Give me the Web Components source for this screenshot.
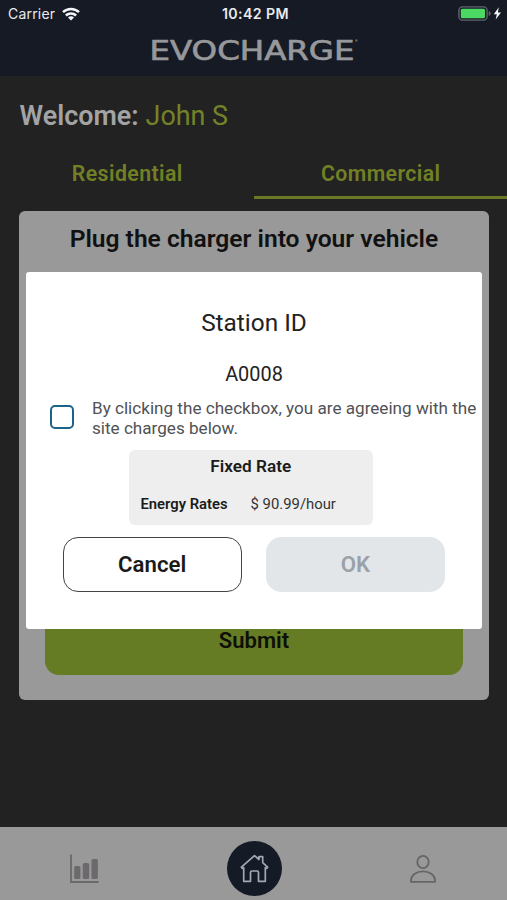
<!DOCTYPE html>
<html lang="en">
<head>
<meta charset="utf-8">
<title>EvoCharge</title>
<style>
html, body { margin: 0; height: 900px; overflow: hidden; background: #222; }
</style>
</head>
<body>
<evo-app></evo-app>
<script>
function define(name, html) {
  const tpl = document.createElement('template');
  tpl.innerHTML = html;
  customElements.define(name, class extends HTMLElement {
    constructor() {
      super();
      this.attachShadow({ mode: 'open' }).append(tpl.content.cloneNode(true));
    }
  });
}

define('status-bar', `
<style>
:host { display: grid; grid-template-columns: 1fr auto 1fr; align-items: center; height: 28px;
  padding: 0 5px 0 8px; color: #e9ebf0; font: 400 14px/28px Inter, sans-serif; }
.l { display: flex; align-items: center; gap: 7px; letter-spacing: .2px; }
.t { font-weight: 600; font-size: 14.200px; letter-spacing: .4px; margin-left: 1px; }
.r { display: flex; align-items: center; justify-content: flex-end; gap: 2px; }
svg { display: block; }
.r svg { margin-top: -2px; }
.l svg { margin-top: -1px; }
</style>
<div class="l"><span>Carrier</span>
<svg width="18" height="14" viewBox="0 0 18 14" fill="none" stroke="#f4f5f8" stroke-width="2.500">
<path d="M1 5.2C5.4 .8 12.600 .8 17 5.200"/><path d="M3.900 8.500C6.700 5.700 11.300 5.700 14.100 8.500"/>
<path d="M9 13.400L6 10.400C7.600 8.900 10.400 8.900 12 10.400Z" fill="#f4f5f8" stroke="none"/></svg></div>
<span class="t">10:42 PM</span>
<div class="r">
<svg width="33" height="15" viewBox="0 0 33 15"><rect x=".9" y=".9" width="28.200" height="13.200" rx="3.600" fill="none" stroke="#60646b" stroke-width="1.400"/>
<rect x="2.800" y="2.800" width="24.200" height="9.400" rx="1.500" fill="#4bd964"/><path d="M30.700 5v5q2-.8 2-2.500t-2-2.500z" fill="#60646b"/></svg>
<svg width="9" height="13" viewBox="0 0 9 13"><path d="M5.800 .3L.8 7.200h3L2.700 12.600 8 5.400H4.900z" fill="#f4f5f8"/></svg></div>`);

define('brand-mark', `
<style>:host { display: flex; justify-content: center; } svg { display: block; }
text { font: 400 27px "DejaVu Sans", sans-serif; fill: #96989c; stroke: #96989c; stroke-width: .7px; }</style>
<svg width="228" height="40" viewBox="0 0 228 40"><text x="9.500" y="31.600" textLength="205" lengthAdjust="spacingAndGlyphs">EVOCHARGE</text>
<circle cx="216.300" cy="12.500" r="1.200" fill="#5d6067"/></svg>`);

define('top-bar', `
<style>:host { display: block; height: 76px; background: #161a24; }</style>
<status-bar></status-bar><brand-mark></brand-mark>`);

define('welcome-line', `
<style>:host { display: flex; gap: 7px; padding: 25px 0 0 19.500px; height: 30px; white-space: nowrap;
  font: 400 26.900px/30px Roboto, sans-serif; color: #758328; } b { font-weight: 600; color: #a3a3a3; }</style>
<b>Welcome:</b><slot></slot>`);

define('tab-item', `
<style>:host { display: block; flex: 1; box-sizing: border-box; height: 42px; text-align: center; color: #728025;
  font: 600 21.300px/34px Roboto, sans-serif; letter-spacing: .4px; padding-left: 1px; border-bottom: 3px solid transparent; }
:host([selected]) { border-color: #6b7924; }</style><slot></slot>`);

define('tab-strip', `<style>:host { display: flex; margin-top: 26px; }</style><slot></slot>`);

define('charge-card', `
<style>:host { display: flex; flex-direction: column; justify-content: space-between; box-sizing: border-box;
  margin: 12px 18.500px 0 19.400px; height: 489px; padding: 12px 25.500px 25.500px; border-radius: 6px; background: #999; }
h2 { margin: 0; text-align: center; white-space: nowrap; color: #111; font: 600 24.600px/32px Roboto, sans-serif; }
.submit { height: 67px; border-radius: 14px; background: #657c25; color: #0d1006; text-align: center;
  font: 600 22px/66px Roboto, sans-serif; }</style>
<h2>Plug the charger into your vehicle</h2><div class="submit"><slot></slot></div>`);

define('check-row', `
<style>:host { display: flex; align-items: center; gap: 18px; color: #505255; font: 400 17.130px/20px Roboto, sans-serif; }
i { flex: none; box-sizing: border-box; width: 24px; height: 24px; border: 2.200px solid #1b6488; border-radius: 5px; margin-top: -2px; }
span { white-space: nowrap; }</style><i></i><span><slot></slot></span>`);

define('rate-box', `
<style>:host { display: block; box-sizing: border-box; width: 244.500px; height: 75px; border-radius: 6px; background: #eee; color: #1b1b1b;
  font: 400 14.850px/20px Roboto, sans-serif; padding: 6px 12px; }
h3 { margin: 0; font: 600 17.200px/20px Roboto, sans-serif; text-align: center; }
div { display: flex; gap: 23px; margin-top: 18px; white-space: nowrap; } b { font-weight: 600; font-size: 14.800px; } span { color: #333; }</style>
<h3>Fixed Rate</h3><div><b>Energy Rates</b><span>$ 90.99/hour</span></div>`);

define('pill-button', `
<style>:host { display: block; box-sizing: border-box; flex: 1; height: 55px; border: 1.500px solid #444; border-radius: 15px;
  color: #1a1a1a; text-align: center; font: 600 22.200px/53px Roboto, sans-serif; }
:host([disabled]) { background: #e3e6e8; border-color: #e3e6e8; color: #9aa1a8; }</style><slot></slot>`);

define('station-dialog', `
<style>:host { position: absolute; left: 26px; top: 272px; width: 456px; height: 357px; box-sizing: border-box; border-radius: 3px;
  background: #fff; color: #222; text-align: center; font-family: Roboto, sans-serif; }
h1 { margin: 36px 0 0; font: 400 24.400px/30px Roboto, sans-serif; }
p { margin: 25px 0 0; font: 400 19.900px/24px Roboto, sans-serif; }
check-row { margin: 11px 0 0 24px; text-align: left; }
rate-box { margin: 12px 0 0 102.500px; }
.a { display: flex; gap: 24px; margin: 12px 37px 0 36.500px; }</style>
<h1>Station ID</h1><p>A0008</p>
<check-row>By clicking the checkbox, you are agreeing with the<br>site charges below.</check-row>
<rate-box></rate-box>
<div class="a"><pill-button>Cancel</pill-button><pill-button disabled>OK</pill-button></div>`);

define('nav-bar', `
<style>:host { display: grid; grid-template-columns: 1fr 1fr 1fr; box-sizing: border-box; height: 73px; margin-top: 127px; padding-top: 10px;
  background: #999; justify-items: center; align-items: center; }
.home { width: 55px; height: 55px; border-radius: 50%; background: #141a26; display: grid; place-items: center; margin-left: 1px; }
svg { display: block; }</style>
<svg width="29" height="30" viewBox="0 0 29 30"><path d="M1 .5V28H28.500" fill="none" stroke="#6b696b" stroke-width="1.800"/>
<g fill="#6b696b"><rect x="4.200" y="12" width="6.200" height="13" rx="1.600"/><rect x="12.800" y="9" width="6.400" height="16" rx="1.600"/><rect x="21.500" y="5" width="6.400" height="20" rx="1.600"/></g></svg>
<div class="home"><svg width="29" height="29" viewBox="0 0 29 29" fill="none" stroke="#a4a8b0" stroke-width="1.700" stroke-linejoin="round" stroke-linecap="round">
<path d="M3.700 13.700L2.200 14.400 1.400 13.200 14.500 1.600 19 5.500V2.700H22.700V8.700L27.600 13.200 26.800 14.400 25.300 13.700V27.300H18.500V18.500Q18.500 17 17 17H12Q10.500 17 10.500 18.500V27.300H3.700Z"/></svg></div>
<svg width="26" height="28" viewBox="0 0 26 28" fill="none" stroke="#656565" stroke-width="1.800" stroke-linejoin="round">
<ellipse cx="13" cy="7" rx="5.700" ry="6.100"/><path d="M1 26.800V25C1.500 20 6.500 16.300 13 16.300S24.500 20 25 25V26.800Z"/></svg>`);

define('evo-app', `
<style>:host { display: block; position: relative; width: 507px; height: 900px; overflow: hidden; background: #222; }</style>
<top-bar></top-bar>
<welcome-line>John S</welcome-line>
<tab-strip><tab-item>Residential</tab-item><tab-item selected>Commercial</tab-item></tab-strip>
<charge-card>Submit</charge-card>
<nav-bar></nav-bar>
<station-dialog></station-dialog>`);
</script>
</body>
</html>
